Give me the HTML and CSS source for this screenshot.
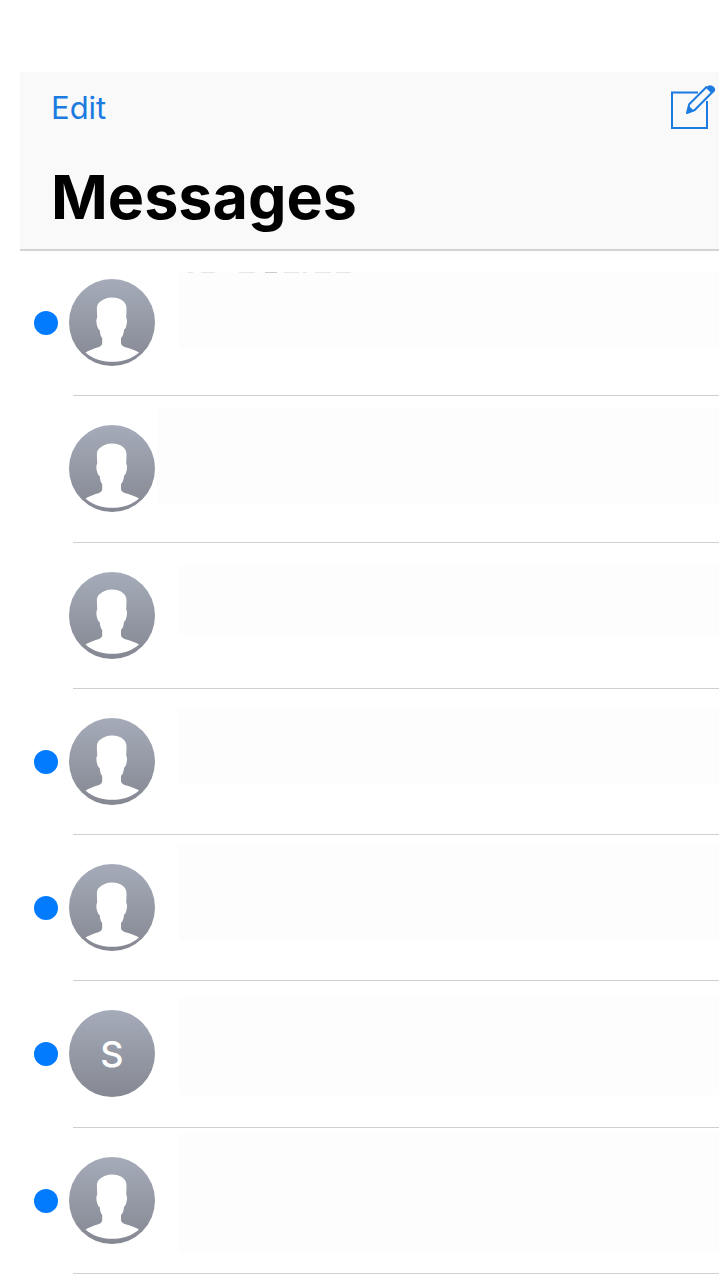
FILE: index.html
```html
<!DOCTYPE html>
<html lang="en">
<head>
<meta charset="utf-8">
<meta name="viewport" content="width=device-width, initial-scale=1">
<title>Messages</title>
<link rel="stylesheet" href="styles.css">
</head>
<body>
<svg class="defs" aria-hidden="true">
  <symbol id="person" viewBox="0 0 86 86">
    <path fill="#fff" d="M43 17.500C48 17.500 51.500 18.800 54 21C57 23.500 57.600 26 57.500 30L57.200 38C58.600 39 58 44 57 47C56.500 48.500 55.500 49 55 50C54.500 54 54 56 52 58L52 63C52.300 66.500 56 67 60 68.300C64 69.500 67 70.800 70 72.500C63 78.800 54 81.800 43.300 81.800C32.500 81.800 23.500 78.800 16.500 72.500C19.500 70.800 22.500 69.500 26 68.300C30 67 33 66.500 33.200 63L33.200 58C31.500 56 31.200 54 30.700 50C29.500 49.500 29 48.500 28.500 47C27.400 44 26.800 39 28.200 38L27.900 30C27.700 26 28.500 24 30.500 22.300C34 19.300 38 17.500 43 17.500Z"/>
  </symbol>
</svg>
<main class="screen">
  <header class="header">
    <div class="toolbar">
      <button class="edit" type="button">Edit</button>
      <button class="compose" type="button" aria-label="New message">
        <svg viewBox="0 0 46 46" fill="none" stroke="#1b7be0" stroke-width="2">
          <path d="M28 8.500H2V44H37V17"/>
          <path d="M19.200 20.300L36.500 3L42 8.500L24.700 26L17 29Z" stroke-linejoin="round"/>
          <path d="M16.500 29.500L18.500 21.500L24 27Z" fill="#1b7be0" stroke="none"/>
          <path d="M37.500 2.500C40.500 -1 47.500 4.500 44.500 7.500L42.800 9.200L36.500 3.200Z" fill="#1b7be0" stroke="none"/>
        </svg>
      </button>
    </div>
    <h1 class="title">Messages</h1>
  </header>
  <ul class="list">
    <li class="row unread">
      <span class="avatar"><svg><use href="#person"/></svg></span>
      <div class="preview preview-first">
        <svg class="trace" viewBox="0 0 166 2" aria-hidden="true"><path d="M1 .5H6M14 .5H28M52 .5H68M97 .5H112M116 .5H120M128 .5H144M149 .5H164" stroke="#e6e6e6"/><path d="M78 .5H90" stroke="#ccc"/></svg>
      </div>
    </li>
    <li class="row">
      <span class="avatar"><svg><use href="#person"/></svg></span>
      <div class="preview preview-wide"></div>
    </li>
    <li class="row">
      <span class="avatar"><svg><use href="#person"/></svg></span>
      <div class="preview preview-short"></div>
    </li>
    <li class="row unread">
      <span class="avatar"><svg><use href="#person"/></svg></span>
      <div class="preview"></div>
    </li>
    <li class="row unread">
      <span class="avatar"><svg><use href="#person"/></svg></span>
      <div class="preview preview-high"></div>
    </li>
    <li class="row unread">
      <span class="avatar">S</span>
      <div class="preview preview-tall"></div>
    </li>
    <li class="row unread">
      <span class="avatar"><svg><use href="#person"/></svg></span>
      <div class="preview preview-full"></div>
    </li>
  </ul>
</main>
</body>
</html>
```
FILE: styles.css
```css
* {
  box-sizing: border-box;
}

body {
  margin: 0;
  background: #fff;
  color: #000;
  font-family: Inter, "Liberation Sans", sans-serif;
}

.defs {
  position: absolute;
  width: 0;
  height: 0;
}

.screen {
  padding: 72px 0 0 20px;
}

.header {
  padding: 12px 3px 12px 31px;
  background: #f9f9f9;
  border-bottom: 2px solid #d2d2d4;
}

.toolbar {
  display: flex;
  justify-content: space-between;
  align-items: center;
  height: 46px;
}

.edit,
.compose {
  padding: 0;
  border: 0;
  background: none;
  color: #1b7be0;
  cursor: pointer;
}

.edit {
  padding-top: 2px;
  font: 400 31px/40px Inter, "Liberation Sans", sans-serif;
}

.compose svg {
  display: block;
  width: 46px;
  height: 46px;
  overflow: visible;
}

.title {
  margin: 27px 0 0;
  font-size: 61px;
  font-weight: 700;
  line-height: 80px;
}

/* Seven equal rows share the list height. */
.list {
  display: grid;
  grid-auto-rows: 1fr;
  min-height: 1024px;
  margin: 0;
  padding: 0;
  list-style: none;
}

.row {
  display: grid;
  grid-template-columns: 49px 86px 1fr;
  align-items: start;
  position: relative;
}

.row::before {
  content: "";
  width: 24px;
  height: 24px;
  margin: 60px 0 0 14px;
  border-radius: 50%;
}

.unread::before {
  background: #027bff;
}

.row::after {
  content: "";
  position: absolute;
  right: 0;
  bottom: 1px;
  left: 53px;
  height: 1px;
  background: #cfcfd1;
}

.avatar {
  display: flex;
  justify-content: center;
  align-items: center;
  height: 87px;
  margin-top: 28px;
  border-radius: 50%;
  background: linear-gradient(#a5abb9, #858892);
  color: #fff;
  font-size: 36px;
  font-weight: 500;
}

.avatar svg {
  width: 86px;
  height: 86px;
}

.preview {
  height: 76px;
  margin: 19px 0 0 24px;
  background: #fdfdfd;
}

.preview-first {
  margin-top: 21px;
}

.preview-wide {
  height: 98px;
  margin: 10px 0 0 2px;
}

.preview-short {
  height: 68px;
  margin-top: 22px;
}

.preview-high {
  height: 95px;
  margin-top: 9px;
}

.preview-tall {
  height: 97px;
  margin-top: 16px;
}

.preview-full {
  height: 119px;
  margin-top: 5px;
}

.trace {
  display: block;
  width: 166px;
  height: 2px;
  margin-left: 8px;
}
```
